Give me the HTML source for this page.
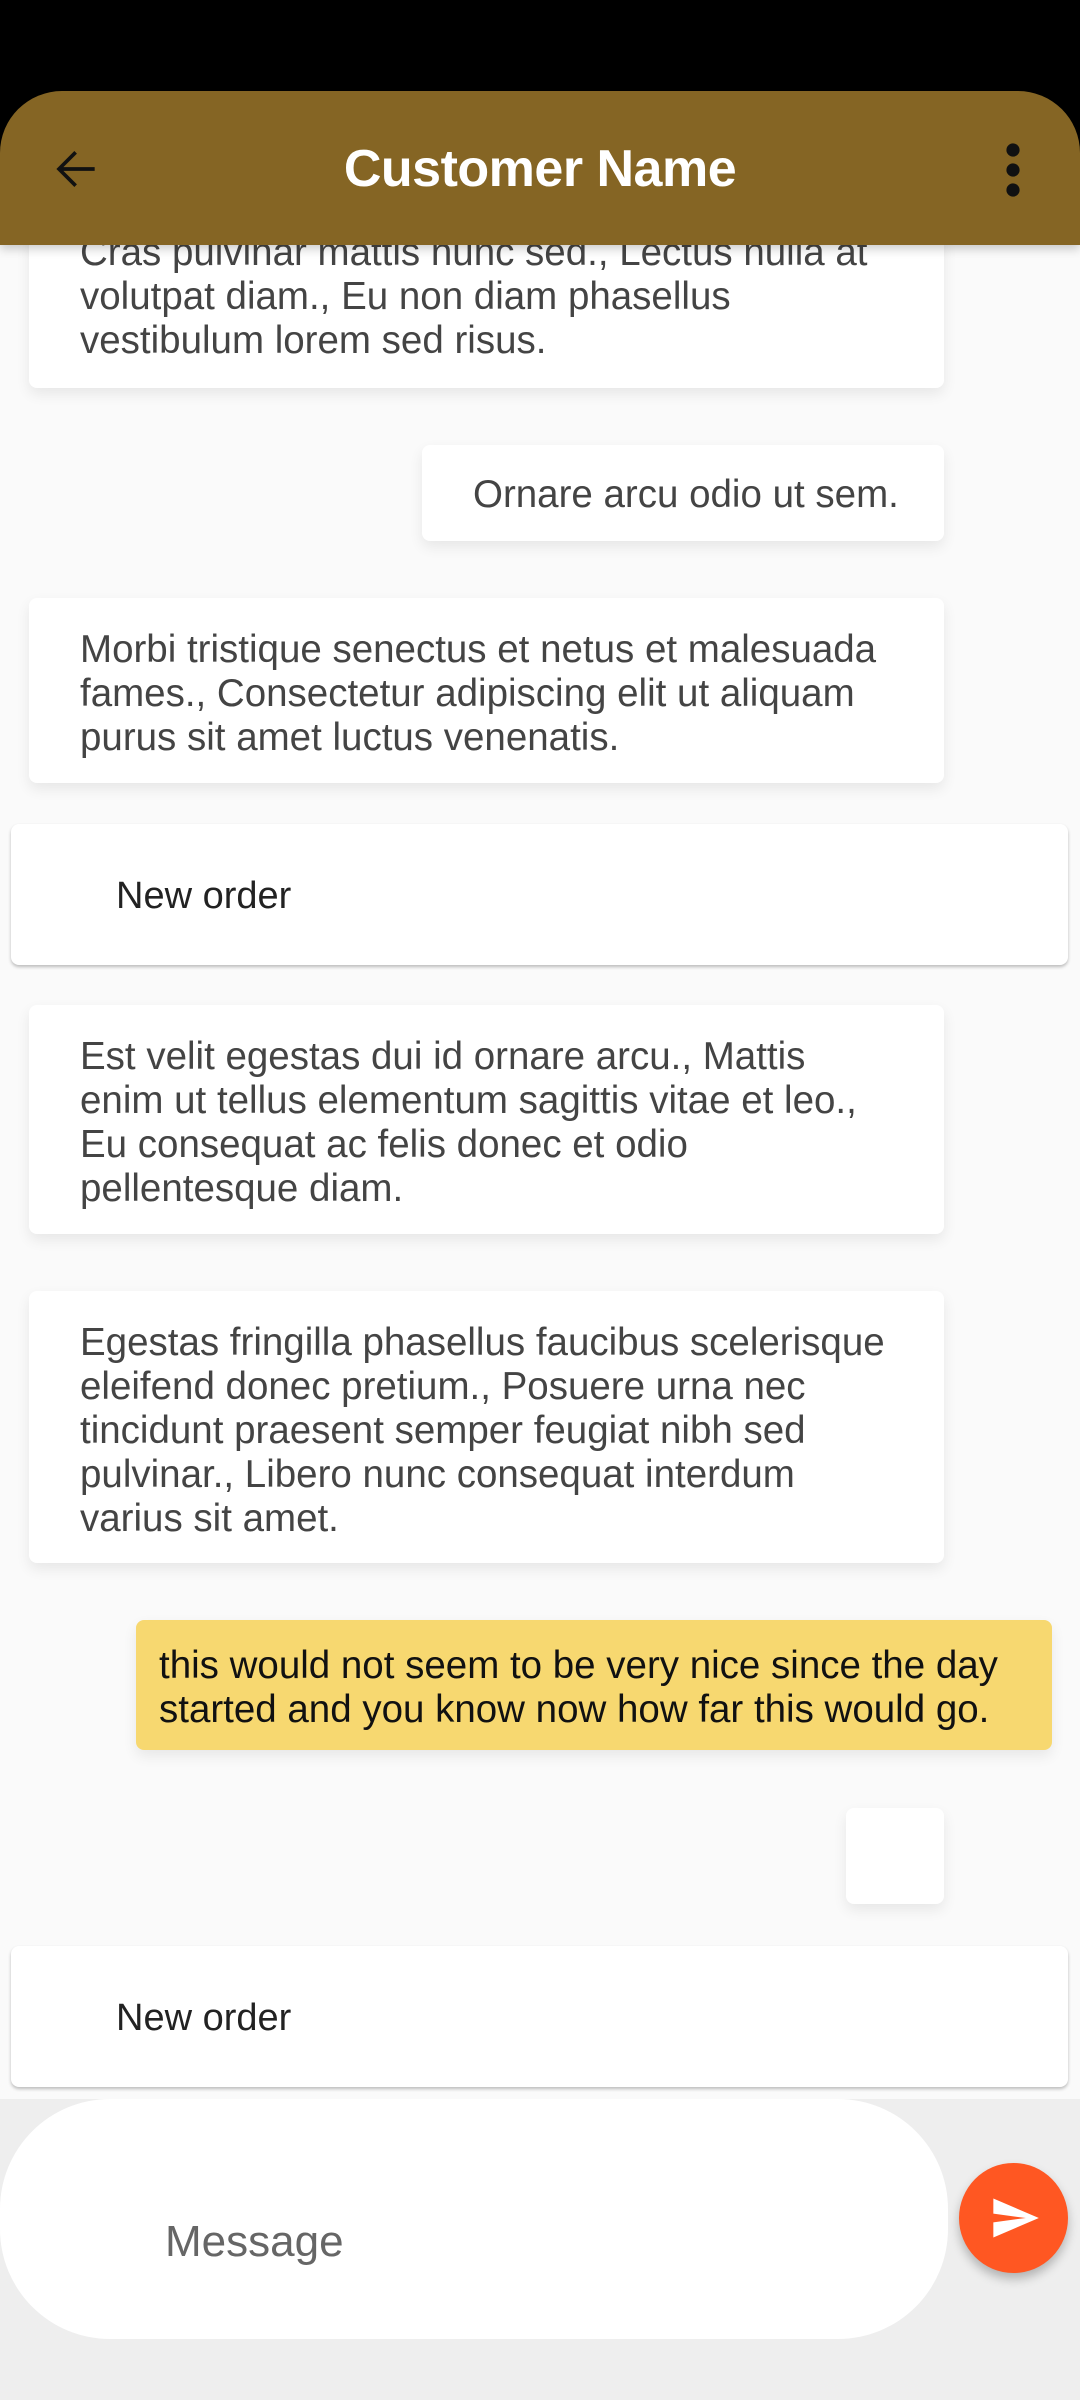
<!DOCTYPE html>
<html><head><meta charset="utf-8"><style>
*{margin:0;padding:0;box-sizing:border-box}
body{width:1080px;height:2400px;background:#fafafa;position:relative;overflow:hidden;font-family:"Liberation Sans",sans-serif}
.sb{position:absolute;left:0;top:0;width:1080px;height:170px;background:#000}
.bar{position:absolute;left:0;top:91px;width:1080px;height:154px;background:#856524;border-radius:62px 62px 0 0;z-index:5;box-shadow:0 4px 10px rgba(0,0,0,.2)}
.title{position:absolute;left:0;right:0;top:48px;text-align:center;color:#fff;font-size:52px;font-weight:bold;letter-spacing:-0.5px}
.b{position:absolute;background:#fff;border-radius:8px;box-shadow:0 6px 14px rgba(0,0,0,.08);color:#444;font-size:38.5px;line-height:44px}
.b p{position:absolute;left:51px;white-space:nowrap}
.card{position:absolute;left:11px;width:1057px;height:141px;background:#fff;border-radius:8px;box-shadow:0 2px 3px rgba(0,0,0,.25);color:#222;font-size:38px}
.card span{position:absolute;left:105px;top:51px}
.bottom{position:absolute;left:0;top:2099px;width:1080px;height:301px;background:#eee}
.inp{position:absolute;left:0;top:2099px;width:948px;height:240px;background:#fff;border-radius:110px/110px}
.msg{position:absolute;left:165px;top:2217px;font-size:44px;color:#666}
.send{position:absolute;left:959px;top:2163px;width:109px;height:110px;border-radius:50%;background:#ff5722;box-shadow:0 6px 10px rgba(0,0,0,.25)}
</style></head><body>
<div class="sb"></div>
<div class="bar">
<svg style="position:absolute;left:48px;top:50px" width="56" height="56" viewBox="0 0 24 24"><path d="M20 11.2H6.6l5.8-5.8-1.1-1.1L3.6 12l7.7 7.7 1.1-1.1-5.8-5.8H20z" fill="#111"/></svg>
<div class="title">Customer Name</div>
<svg style="position:absolute;left:989px;top:51px" width="48" height="56" viewBox="0 0 24 28"><circle cx="12" cy="4" r="3.3" fill="#111"/><circle cx="12" cy="14" r="3.3" fill="#111"/><circle cx="12" cy="24" r="3.3" fill="#111"/></svg>
</div>
<div class="b" style="left:29px;top:200px;width:915px;height:188px"><p style="top:31px">Cras pulvinar mattis nunc sed., Lectus nulla at<br>volutpat diam., Eu non diam phasellus<br>vestibulum lorem sed risus.</p></div>
<div class="b" style="left:422px;top:445px;width:522px;height:96px"><p style="top:28px">Ornare arcu odio ut sem.</p></div>
<div class="b" style="left:29px;top:598px;width:915px;height:185px"><p style="top:30px">Morbi tristique senectus et netus et malesuada<br>fames., Consectetur adipiscing elit ut aliquam<br>purus sit amet luctus venenatis.</p></div>
<div class="card" style="top:824px"><span>New order</span></div>
<div class="b" style="left:29px;top:1005px;width:915px;height:229px"><p style="top:30px">Est velit egestas dui id ornare arcu., Mattis<br>enim ut tellus elementum sagittis vitae et leo.,<br>Eu consequat ac felis donec et odio<br>pellentesque diam.</p></div>
<div class="b" style="left:29px;top:1291px;width:915px;height:272px"><p style="top:30px">Egestas fringilla phasellus faucibus scelerisque<br>eleifend donec pretium., Posuere urna nec<br>tincidunt praesent semper feugiat nibh sed<br>pulvinar., Libero nunc consequat interdum<br>varius sit amet.</p></div>
<div class="b" style="left:136px;top:1620px;width:916px;height:130px;background:#f7d870;color:#111"><p style="left:23px;top:24px">this would not seem to be very nice since the day<br>started and you know now how far this would go.</p></div>
<div class="b" style="left:846px;top:1808px;width:98px;height:96px"></div>
<div class="card" style="top:1946px"><span>New order</span></div>
<div class="bottom"></div>
<div class="inp"></div>
<div class="msg">Message</div>
<div class="send"><svg style="position:absolute;left:28px;top:29px" width="56" height="52" viewBox="0 0 24 24"><path d="M2.01 21L23 12 2.01 3 2 10l15 2-15 2z" fill="#fff"/></svg></div>
</body></html>
